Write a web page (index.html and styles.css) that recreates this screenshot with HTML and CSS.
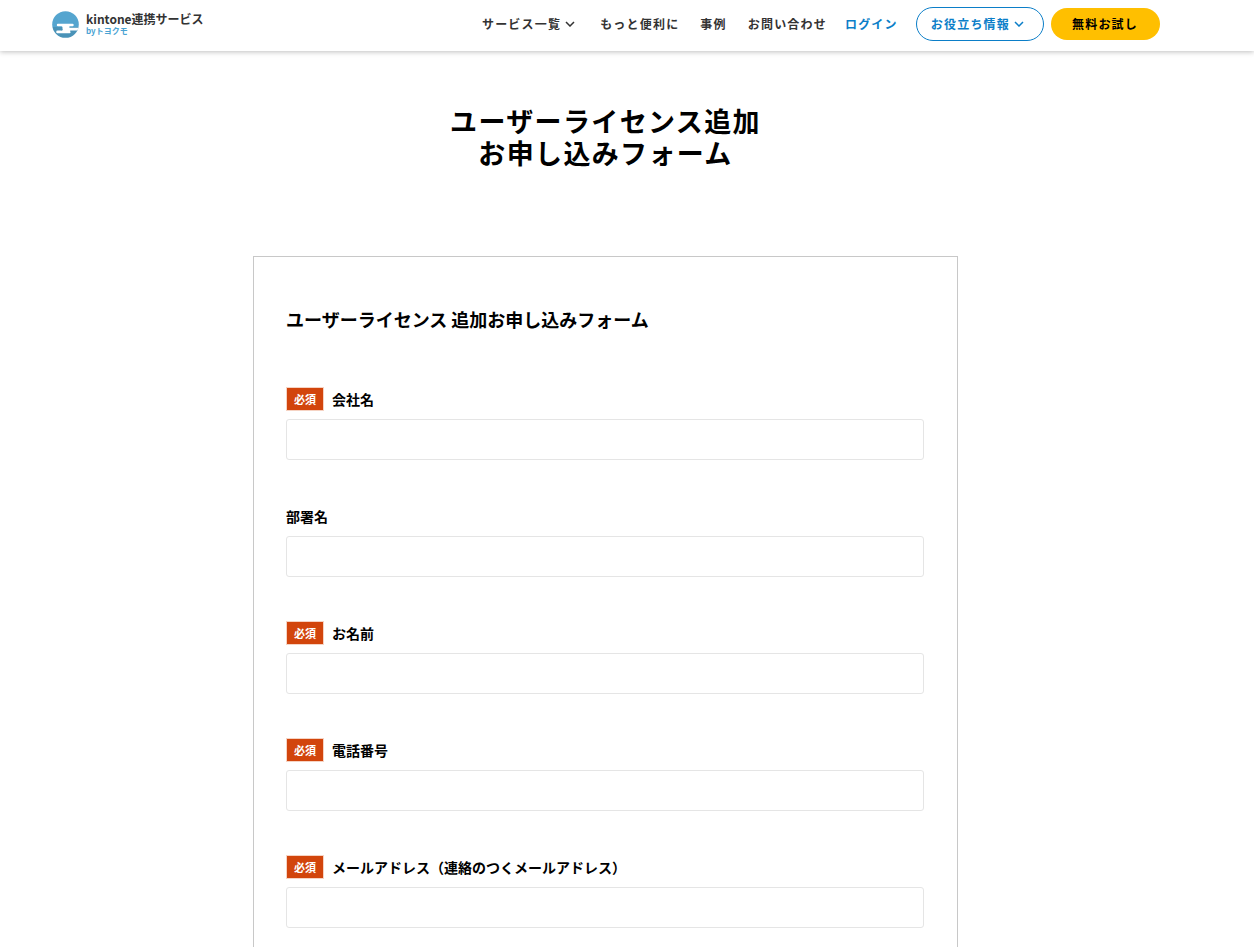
FILE: index.html
```
<!DOCTYPE html>
<html lang="ja">
<head>
  <meta charset="UTF-8" />
  <meta name="viewport" content="width=device-width, initial-scale=1.0"/>
  <title>ユーザーライセンス追加お申し込みフォーム</title>
  <link rel="stylesheet" href="styles.css">
</head>
<body>
  <header class="header">
    <a class="logo" href="#">
      <svg class="logo-mark" viewBox="0 0 27 27" aria-hidden="true">
        <defs>
          <clipPath id="circle"><circle cx="13.5" cy="13.5" r="13.3"/></clipPath>
        </defs>
        <g clip-path="url(#circle)">
          <rect width="27" height="16" fill="#55a5cf"/>
          <rect y="16" width="27" height="11" fill="#4a93b8"/>
          <path d="M6 12.800H20.500a1.200 1.200 0 0 1 0 2.400H18a.8.8 0 0 0 0 1.600H27V19.400H18.500a.6.6 0 0 0-.3 1a1 1 0 0 1-.7 1.800H5.500a1.300 1.300 0 0 1 0-2.600H9a1.200 1.200 0 0 0 1.500-1.800V16.500a1.200 1.200 0 0 0-1-1.300H6a1.200 1.200 0 0 1 0-2.400Z" fill="#fff"/>
        </g>
      </svg>
      <span class="logo-text">
        <span class="logo-name">kintone連携サービス</span>
        <span class="logo-by">byトヨクモ</span>
      </span>
    </a>

    <nav class="nav">
      <div class="nav-links">
        <button type="button" class="nav-item">サービス一覧
          <svg class="chevron" viewBox="0 0 10 6" aria-hidden="true"><path d="M1 1l4 4 4-4"/></svg>
        </button>
        <a class="nav-item" href="#">もっと便利に</a>
        <a class="nav-item" href="#">事例</a>
        <a class="nav-item" href="#">お問い合わせ</a>
      </div>
      <a class="nav-item login" href="#">ログイン</a>
      <div class="nav-buttons">
        <button type="button" class="btn btn-outline">お役立ち情報
          <svg class="chevron" viewBox="0 0 10 6" aria-hidden="true"><path d="M1 1l4 4 4-4"/></svg>
        </button>
        <a class="btn btn-trial" href="#">無料お試し</a>
      </div>
    </nav>
  </header>

  <main class="main">
    <h1>ユーザーライセンス追加<br>お申し込みフォーム</h1>

    <form class="form-card">
      <h2>ユーザーライセンス 追加お申し込みフォーム</h2>

      <div class="field">
        <label for="company"><span class="required">必須</span>会社名</label>
        <input type="text" id="company" required>
      </div>
      <div class="field">
        <label for="department">部署名</label>
        <input type="text" id="department">
      </div>
      <div class="field">
        <label for="name"><span class="required">必須</span>お名前</label>
        <input type="text" id="name" required>
      </div>
      <div class="field">
        <label for="tel"><span class="required">必須</span>電話番号</label>
        <input type="tel" id="tel" required>
      </div>
      <div class="field">
        <label for="email"><span class="required">必須</span>メールアドレス（連絡のつくメールアドレス）</label>
        <input type="email" id="email" required>
      </div>
    </form>
  </main>
</body>
</html>
```

FILE: styles.css
```
* {
  box-sizing: border-box;
}

html {
  scrollbar-width: none;
}

body {
  margin: 0;
  font-family: "Noto Sans CJK JP", "Noto Sans", sans-serif;
  background: #fff;
  color: #000;
}

a {
  text-decoration: none;
}

/* Header */
.header {
  display: flex;
  justify-content: space-between;
  align-items: center;
  padding: 7px 94px 10px 52px;
  box-shadow: 0 1px 5px rgba(0, 0, 0, 0.25);
}

.logo {
  display: flex;
  align-items: center;
  gap: 7px;
}

.logo-mark {
  width: 27px;
  height: 27px;
}

.logo-text {
  display: flex;
  flex-direction: column;
  font-weight: bold;
}

.logo-name {
  color: #333;
  font-size: 12px;
  line-height: 14px;
}

.logo-by {
  color: #4aa3d3;
  font-size: 8px;
  line-height: 10px;
}

.nav {
  display: flex;
  align-items: center;
  gap: 18px;
}

.nav-links {
  display: flex;
  align-items: center;
  gap: 21px;
}

.nav-item,
.btn {
  display: flex;
  align-items: center;
  gap: 4px;
  padding: 0;
  border: none;
  background: none;
  color: #333;
  font-family: inherit;
  font-size: 12px;
  font-weight: bold;
  letter-spacing: 0.1em;
  line-height: 20px;
  white-space: nowrap;
  cursor: pointer;
}

.nav-links button {
  margin-right: 4px;
}

.chevron {
  width: 10px;
  height: 6px;
  fill: none;
  stroke: currentColor;
  stroke-width: 1.5;
}

.nav-item.login {
  color: #0b7ec8;
}

.nav-buttons {
  display: flex;
  align-items: center;
  gap: 7px;
}

.btn {
  border-radius: 17px;
}

.btn-outline {
  padding: 6px 19px 6px 14px;
  border: 1px solid #0b7ec8;
  color: #0b7ec8;
}

.btn-trial {
  padding: 6px 22px 6px 21px;
  background: #ffbf00;
  color: #000;
}

/* Form */
.main {
  padding: 54px 43px 0 0;
}

h1 {
  margin: 0;
  font-size: 27px;
  letter-spacing: 0.05em;
  line-height: 32px;
  text-align: center;
}

.form-card {
  max-width: 705px;
  margin: 87px auto 0;
  padding: 46px 33px 46px 32px;
  border: 1px solid #c8c8c8;
}

h2 {
  margin: 0 0 52px;
  font-size: 18px;
  line-height: 32px;
}

.field {
  margin-bottom: 44px;
}

.field label {
  display: flex;
  align-items: center;
  gap: 8px;
  margin-bottom: 8px;
  font-size: 14px;
  font-weight: bold;
  line-height: 24px;
}

.required {
  padding: 0 7px;
  border: 1px solid #f6d3c3;
  background: #d2450c;
  color: #fff;
  font-size: 11px;
  line-height: 22px;
}

.field input {
  display: block;
  width: 100%;
  height: 41px;
  padding: 8px 12px;
  border: 1px solid #e5e5e5;
  border-radius: 3px;
  font: inherit;
}
```
